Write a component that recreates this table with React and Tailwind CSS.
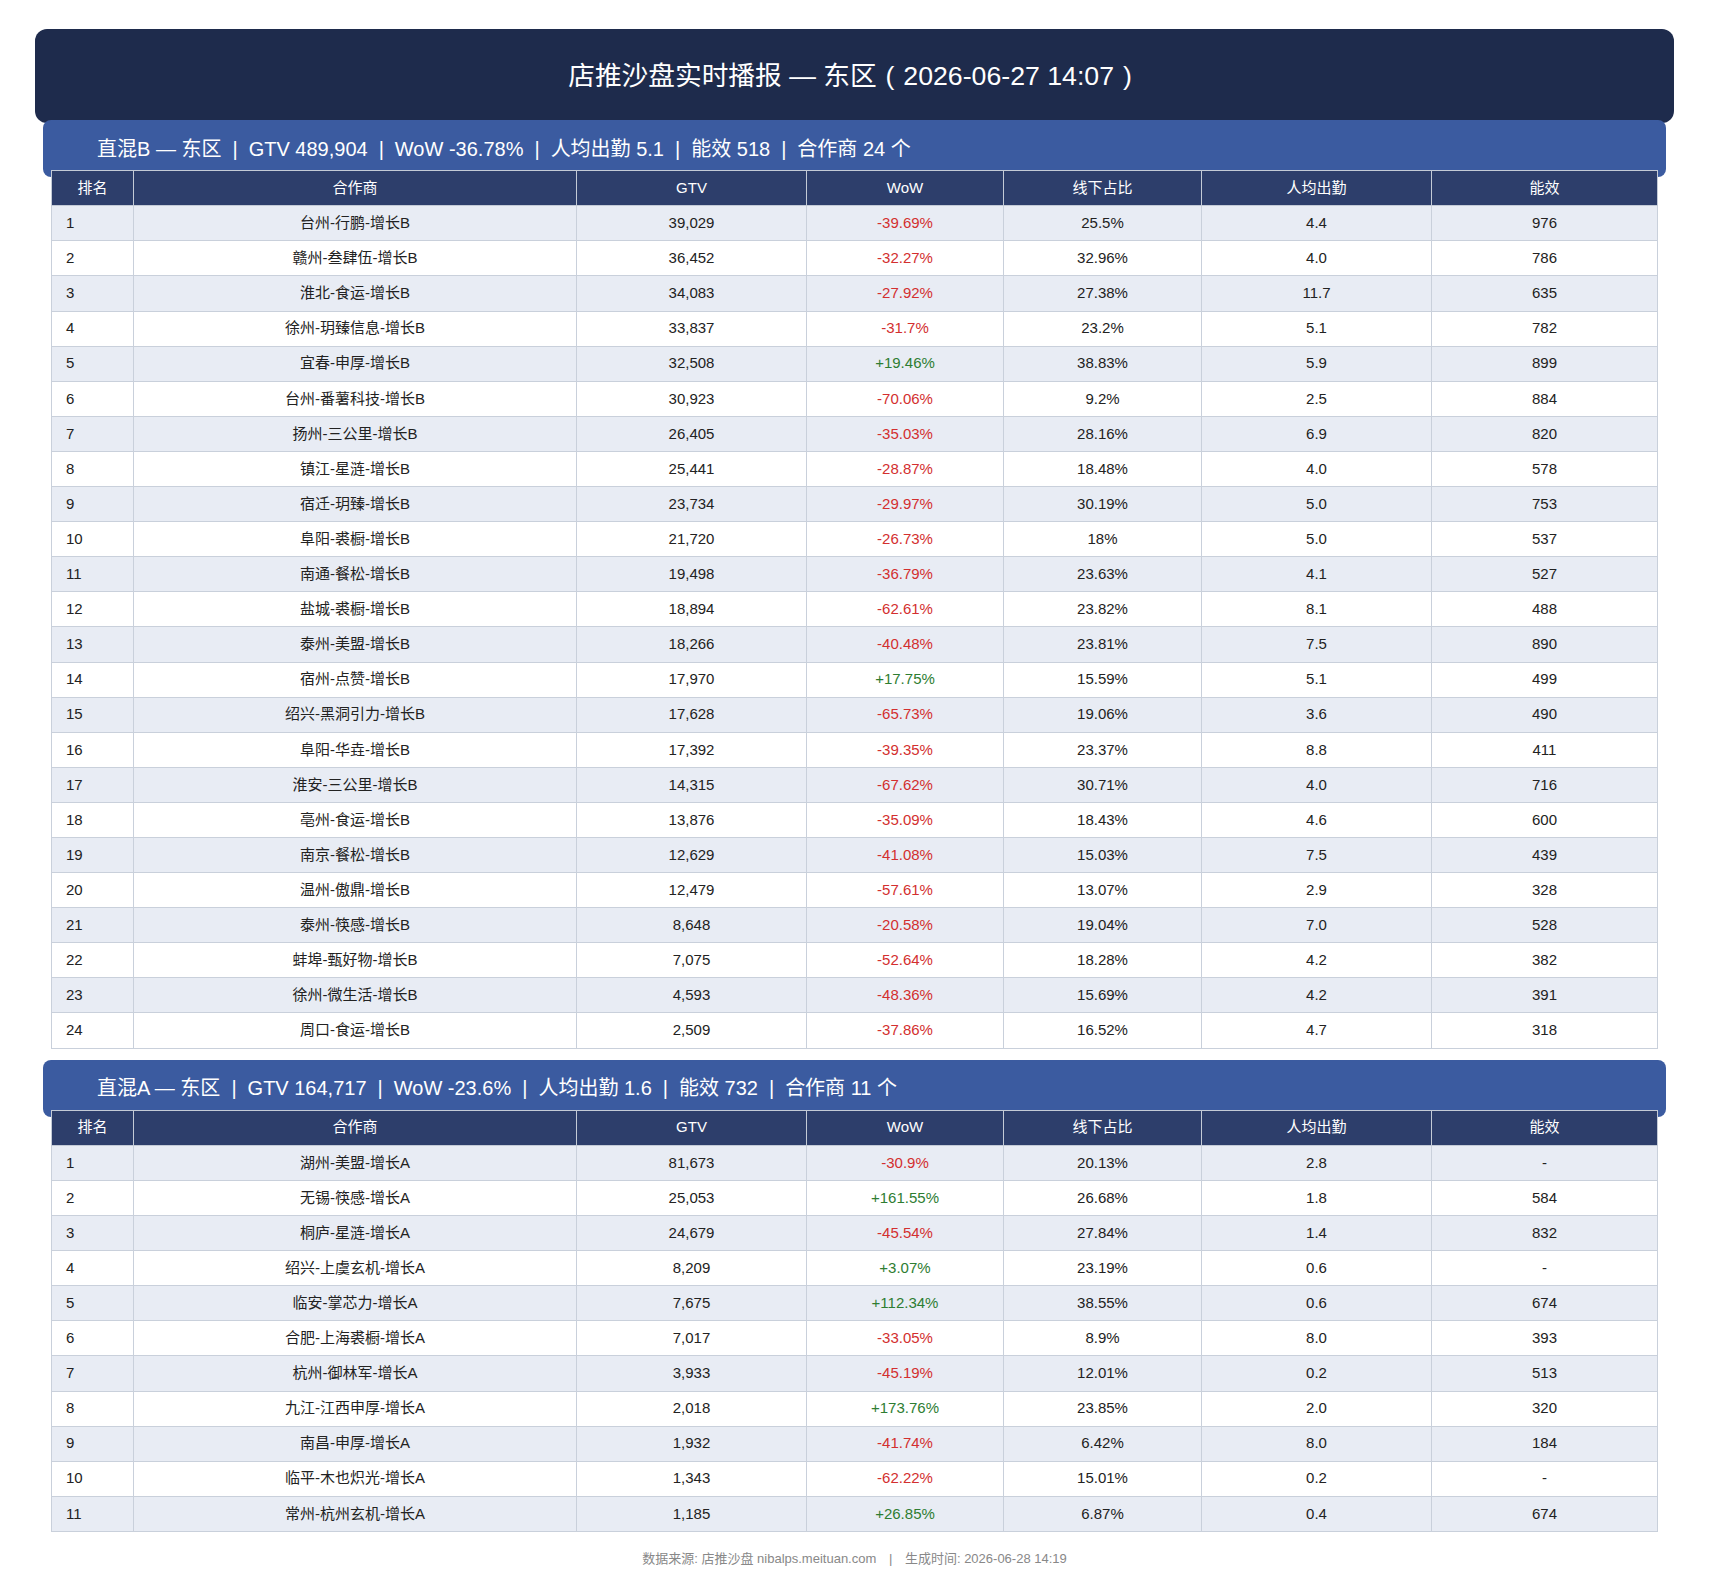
import React from "react";

const B = [
  ["1", "台州-行鹏-增长B", "39,029", "-39.69%", "25.5%", "4.4", "976"],
  ["2", "赣州-叁肆伍-增长B", "36,452", "-32.27%", "32.96%", "4.0", "786"],
  ["3", "淮北-食运-增长B", "34,083", "-27.92%", "27.38%", "11.7", "635"],
  ["4", "徐州-玥臻信息-增长B", "33,837", "-31.7%", "23.2%", "5.1", "782"],
  ["5", "宜春-申厚-增长B", "32,508", "+19.46%", "38.83%", "5.9", "899"],
  ["6", "台州-番薯科技-增长B", "30,923", "-70.06%", "9.2%", "2.5", "884"],
  ["7", "扬州-三公里-增长B", "26,405", "-35.03%", "28.16%", "6.9", "820"],
  ["8", "镇江-星涟-增长B", "25,441", "-28.87%", "18.48%", "4.0", "578"],
  ["9", "宿迁-玥臻-增长B", "23,734", "-29.97%", "30.19%", "5.0", "753"],
  ["10", "阜阳-裘橱-增长B", "21,720", "-26.73%", "18%", "5.0", "537"],
  ["11", "南通-餐松-增长B", "19,498", "-36.79%", "23.63%", "4.1", "527"],
  ["12", "盐城-裘橱-增长B", "18,894", "-62.61%", "23.82%", "8.1", "488"],
  ["13", "泰州-美盟-增长B", "18,266", "-40.48%", "23.81%", "7.5", "890"],
  ["14", "宿州-点赞-增长B", "17,970", "+17.75%", "15.59%", "5.1", "499"],
  ["15", "绍兴-黑洞引力-增长B", "17,628", "-65.73%", "19.06%", "3.6", "490"],
  ["16", "阜阳-华垚-增长B", "17,392", "-39.35%", "23.37%", "8.8", "411"],
  ["17", "淮安-三公里-增长B", "14,315", "-67.62%", "30.71%", "4.0", "716"],
  ["18", "亳州-食运-增长B", "13,876", "-35.09%", "18.43%", "4.6", "600"],
  ["19", "南京-餐松-增长B", "12,629", "-41.08%", "15.03%", "7.5", "439"],
  ["20", "温州-傲鼎-增长B", "12,479", "-57.61%", "13.07%", "2.9", "328"],
  ["21", "泰州-筷感-增长B", "8,648", "-20.58%", "19.04%", "7.0", "528"],
  ["22", "蚌埠-甄好物-增长B", "7,075", "-52.64%", "18.28%", "4.2", "382"],
  ["23", "徐州-微生活-增长B", "4,593", "-48.36%", "15.69%", "4.2", "391"],
  ["24", "周口-食运-增长B", "2,509", "-37.86%", "16.52%", "4.7", "318"],
];

const A = [
  ["1", "湖州-美盟-增长A", "81,673", "-30.9%", "20.13%", "2.8", "-"],
  ["2", "无锡-筷感-增长A", "25,053", "+161.55%", "26.68%", "1.8", "584"],
  ["3", "桐庐-星涟-增长A", "24,679", "-45.54%", "27.84%", "1.4", "832"],
  ["4", "绍兴-上虞玄机-增长A", "8,209", "+3.07%", "23.19%", "0.6", "-"],
  ["5", "临安-掌芯力-增长A", "7,675", "+112.34%", "38.55%", "0.6", "674"],
  ["6", "合肥-上海裘橱-增长A", "7,017", "-33.05%", "8.9%", "8.0", "393"],
  ["7", "杭州-御林军-增长A", "3,933", "-45.19%", "12.01%", "0.2", "513"],
  ["8", "九江-江西申厚-增长A", "2,018", "+173.76%", "23.85%", "2.0", "320"],
  ["9", "南昌-申厚-增长A", "1,932", "-41.74%", "6.42%", "8.0", "184"],
  ["10", "临平-木也炽光-增长A", "1,343", "-62.22%", "15.01%", "0.2", "-"],
  ["11", "常州-杭州玄机-增长A", "1,185", "+26.85%", "6.87%", "0.4", "674"],
];

const headers = ["排名", "合作商", "GTV", "WoW", "线下占比", "人均出勤", "能效"];

function Sep() {
  return <span className="mx-[11px]">|</span>;
}

function Section({ title, gtv, wow, att, eff, count, rows }) {
  return (
    <section className="relative mx-2">
      <div className="h-[57px] rounded-lg bg-[#3b5ba0] text-white text-[20px] pl-[54px] flex items-center whitespace-nowrap">
        <span>{title} — 东区</span>
        <Sep />
        <span>GTV {gtv}</span>
        <Sep />
        <span>WoW {wow}</span>
        <Sep />
        <span>人均出勤 {att}</span>
        <Sep />
        <span>能效 {eff}</span>
        <Sep />
        <span>合作商 {count} 个</span>
      </div>
      <div className="relative z-10 mx-2 -mt-[7px]">
        <table className="w-full table-fixed border-collapse text-[15px]">
          <colgroup>
            <col className="w-[82px]" />
            <col className="w-[443px]" />
            <col className="w-[230px]" />
            <col className="w-[197px]" />
            <col className="w-[198px]" />
            <col className="w-[230px]" />
            <col />
          </colgroup>
          <thead>
            <tr className="h-[35.3px] bg-[#2d3e6b] text-white">
              {headers.map((h) => (
                <th key={h} className="border border-[#c3cad6] font-normal text-center p-0">
                  {h}
                </th>
              ))}
            </tr>
          </thead>
          <tbody>
            {rows.map((r, i) => (
              <tr key={r[0]} className={`h-[35.1px] text-[#222] ${i % 2 === 0 ? "bg-[#e8ecf4]" : "bg-white"}`}>
                <td className="border border-[#c9d0db] text-left pl-[14px] p-0">{r[0]}</td>
                <td className="border border-[#c9d0db] text-center p-0">{r[1]}</td>
                <td className="border border-[#c9d0db] text-center p-0">{r[2]}</td>
                <td
                  className={`border border-[#c9d0db] text-center p-0 ${
                    r[3].startsWith("+") ? "text-[#2e7d32]" : "text-[#d32f2f]"
                  }`}
                >
                  {r[3]}
                </td>
                <td className="border border-[#c9d0db] text-center p-0">{r[4]}</td>
                <td className="border border-[#c9d0db] text-center p-0">{r[5]}</td>
                <td className="border border-[#c9d0db] text-center p-0">{r[6]}</td>
              </tr>
            ))}
          </tbody>
        </table>
      </div>
    </section>
  );
}

export default function App() {
  return (
    <div
      className="bg-white px-[35px] pt-[29px] pb-[27px]"
      style={{ fontFamily: '"Liberation Sans", "Noto Sans CJK SC", sans-serif' }}
    >
      <div className="h-[94px] rounded-[12px] bg-[#1e2b4c] text-white text-[26.7px] flex items-center justify-center whitespace-nowrap">
        店推沙盘实时播报 — 东区<span className="inline-block w-[1em] text-center">(</span>2026-06-27 14:07
        <span className="inline-block w-[1em] text-center">)</span>
      </div>
      <div className="-mt-[3px]">
        <Section title="直混B" gtv="489,904" wow="-36.78%" att="5.1" eff="518" count="24" rows={B} />
      </div>
      <div className="mt-[11px]">
        <Section title="直混A" gtv="164,717" wow="-23.6%" att="1.6" eff="732" count="11" rows={A} />
      </div>
      <div className="mt-[18px] text-center text-[13px] leading-[18px] text-[#888]">
        数据来源: 店推沙盘 nibalps.meituan.com <span className="mx-[9px]">|</span> 生成时间: 2026-06-28 14:19
      </div>
    </div>
  );
}
